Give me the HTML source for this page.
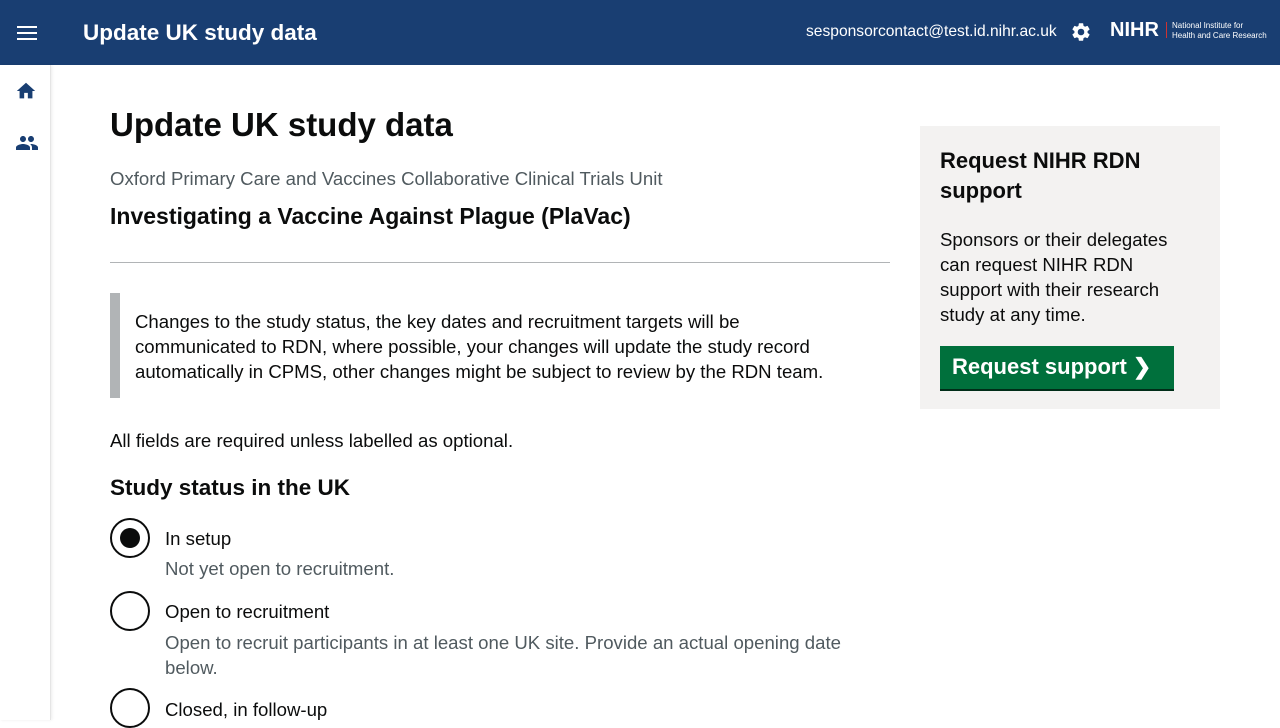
<!DOCTYPE html>
<html><head><style>
*{margin:0;padding:0;box-sizing:border-box}
body{width:1280px;height:720px;overflow:hidden;font-family:"Liberation Sans",sans-serif;background:#fff;color:#0b0c0c;position:relative}
.hdr{position:absolute;left:0;top:0;width:1280px;height:65px;background:#193e72;color:#fff}
.side{position:absolute;left:0;top:65px;width:51px;height:655px;border-right:1px solid #e5e5e5;box-shadow:1px 0 3px rgba(0,0,0,.08)}
.abs{position:absolute}
.radio{position:absolute;left:110px;width:40px;height:40px;border:2px solid #0b0c0c;border-radius:50%}
.t{font-size:18.6px}
</style></head><body>
<div class="hdr">
 <div class="abs" style="left:17px;top:26px;width:20px;height:2px;background:#fff;box-shadow:0 6px 0 #fff,0 12px 0 #fff"></div>
 <div class="abs" style="left:83px;top:20px;font-size:22.5px;font-weight:bold">Update UK study data</div>
 <div class="abs" style="left:806px;top:23px;font-size:15.6px">sesponsorcontact@test.id.nihr.ac.uk</div>
 <svg class="abs" style="left:1070px;top:21px" width="22" height="22" viewBox="0 0 24 24"><path fill="#fff" d="M19.14 12.94c.04-.3.06-.61.06-.94 0-.32-.02-.64-.07-.94l2.03-1.58a.49.49 0 0 0 .12-.61l-1.92-3.32a.49.49 0 0 0-.59-.22l-2.39.96c-.5-.38-1.030-.7-1.62-.94l-.36-2.54a.48.48 0 0 0-.48-.41h-3.84c-.24 0-.43.17-.47.41l-.36 2.54c-.59.24-1.13.57-1.62.94l-2.39-.96a.48.48 0 0 0-.59.22L2.74 8.87c-.12.21-.08.47.12.61l2.03 1.58c-.05.3-.09.63-.09.94s.02.64.07.94l-2.03 1.58a.49.49 0 0 0-.12.61l1.92 3.32c.12.22.37.29.59.22l2.39-.96c.5.38 1.03.7 1.62.94l.36 2.54c.05.24.24.41.48.41h3.84c.24 0 .44-.17.47-.41l.36-2.54c.59-.24 1.13-.56 1.62-.94l2.39.96c.22.08.47 0 .59-.22l1.92-3.32c.12-.22.07-.47-.12-.61l-2.01-1.58zM12 15.6A3.6 3.6 0 1 1 12 8.4a3.6 3.6 0 0 1 0 7.2z"/></svg>
 <div class="abs" style="left:1110px;top:19px;font-size:20px;font-weight:bold">NIHR</div>
 <div class="abs" style="left:1166px;top:22px;width:1px;height:16px;background:#c33"></div>
 <div class="abs" style="left:1172px;top:21px;font-size:8px;line-height:10px">National Institute for<br>Health and Care Research</div>
</div>
<div class="side">
 <svg class="abs" style="left:15px;top:15px" width="22" height="22" viewBox="0 0 24 24"><path fill="#193e72" d="M10 20v-6h4v6h5v-8h3L12 3 2 12h3v8z"/></svg>
 <svg class="abs" style="left:15px;top:66px" width="24" height="24" viewBox="0 0 24 24"><path fill="#193e72" d="M16 11c1.66 0 2.99-1.34 2.99-3S17.66 5 16 5c-1.66 0-3 1.34-3 3s1.34 3 3 3zm-8 0c1.66 0 2.99-1.34 2.99-3S9.66 5 8 5C6.34 5 5 6.340 5 8s1.34 3 3 3zm0 2c-2.33 0-7 1.17-7 3.5V19h14v-2.5c0-2.33-4.67-3.5-7-3.5zm8 0c-.29 0-.62.02-.97.05 1.16.84 1.97 1.97 1.97 3.45V19h6v-2.5c0-2.33-4.67-3.5-7-3.5z"/></svg>
</div>
<div class="abs" style="left:110px;top:106px;font-size:33px;font-weight:bold">Update UK study data</div>
<div class="abs" style="left:110px;top:168px;font-size:18.6px;color:#505a5f">Oxford Primary Care and Vaccines Collaborative Clinical Trials Unit</div>
<div class="abs" style="left:110px;top:203px;font-size:23px;font-weight:bold">Investigating a Vaccine Against Plague (PlaVac)</div>
<div class="abs" style="left:110px;top:262px;width:780px;height:1px;background:#b1b4b6"></div>
<div class="abs" style="left:110px;top:293px;width:10px;height:105px;background:#b1b4b6"></div>
<div class="abs t" style="left:135px;top:309px;line-height:25px">Changes to the study status, the key dates and recruitment targets will be<br>communicated to RDN, where possible, your changes will update the study record<br>automatically in CPMS, other changes might be subject to review by the RDN team.</div>
<div class="abs t" style="left:110px;top:430px">All fields are required unless labelled as optional.</div>
<div class="abs" style="left:110px;top:475px;font-size:22.5px;font-weight:bold">Study status in the UK</div>
<div class="radio" style="top:518px"><div class="abs" style="left:8px;top:8px;width:20px;height:20px;border-radius:50%;background:#0b0c0c"></div></div>
<div class="abs t" style="left:165px;top:528px">In setup</div>
<div class="abs t" style="left:165px;top:558px;color:#505a5f">Not yet open to recruitment.</div>
<div class="radio" style="top:591px"></div>
<div class="abs t" style="left:165px;top:601px">Open to recruitment</div>
<div class="abs t" style="left:165px;top:630px;line-height:25px;color:#505a5f">Open to recruit participants in at least one UK site. Provide an actual opening date<br>below.</div>
<div class="radio" style="top:688px"></div>
<div class="abs t" style="left:165px;top:699px">Closed, in follow-up</div>
<div class="abs" style="left:920px;top:126px;width:300px;height:283px;background:#f3f2f1"></div>
<div class="abs" style="left:940px;top:146px;font-size:22px;font-weight:bold;line-height:30px">Request NIHR RDN<br>support</div>
<div class="abs t" style="left:940px;top:227px;line-height:25px">Sponsors or their delegates<br>can request NIHR RDN<br>support with their research<br>study at any time.</div>
<div class="abs" style="left:940px;top:346px;width:234px;height:43px;background:#00703c;box-shadow:0 2px 0 #002d18;color:#fff;font-size:22px;font-weight:bold;padding:8px 12px">Request support <span>❯</span></div>
</body></html>
